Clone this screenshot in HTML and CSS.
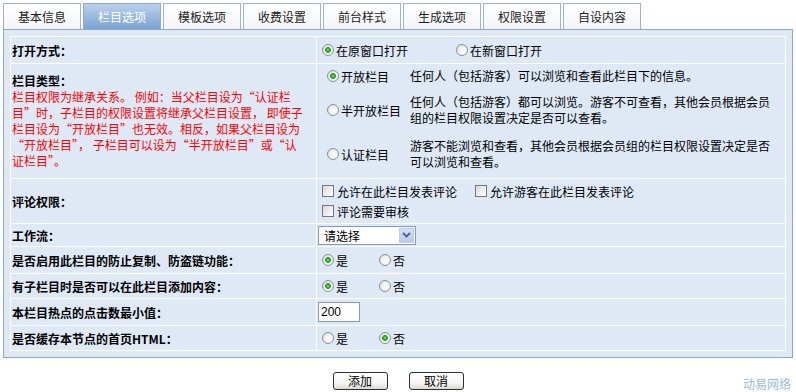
FILE: index.html
```html
<!DOCTYPE html>
<html lang="zh-CN">
<head>
<meta charset="utf-8">
<title>栏目选项</title>
<link rel="stylesheet" href="styles.css">
</head>
<body>
<div class="tabs">
  <div class="tab">基本信息</div>
  <div class="tab active">栏目选项</div>
  <div class="tab">模板选项</div>
  <div class="tab">收费设置</div>
  <div class="tab">前台样式</div>
  <div class="tab">生成选项</div>
  <div class="tab">权限设置</div>
  <div class="tab">自设内容</div>
</div>
<div class="panel">
  <div class="form">
    <div class="lab">打开方式：</div>
    <div class="val opts opts-open">
      <label><input type="radio" name="open" checked>在原窗口打开</label>
      <label><input type="radio" name="open">在新窗口打开</label>
    </div>

    <div class="lab stack">
      <div>栏目类型：</div>
      <div class="note">栏目权限为继承关系。 例如：当父栏目设为“认证栏<br>目”时，子栏目的权限设置将继承父栏目设置， 即使子<br>栏目设为“开放栏目”也无效。相反，如果父栏目设为<br>“开放栏目”， 子栏目可以设为“半开放栏目”或“认<br>证栏目”。</div>
    </div>
    <div class="val top">
      <div class="types">
        <label><input type="radio" name="type" checked>开放栏目</label>
        <div class="desc">任何人（包括游客）可以浏览和查看此栏目下的信息。</div>
        <label><input type="radio" name="type">半开放栏目</label>
        <div class="desc">任何人（包括游客）都可以浏览。游客不可查看，其他会员根据会员<br>组的栏目权限设置决定是否可以查看。</div>
        <label><input type="radio" name="type">认证栏目</label>
        <div class="desc">游客不能浏览和查看，其他会员根据会员组的栏目权限设置决定是否<br>可以浏览和查看。</div>
      </div>
    </div>

    <div class="lab">评论权限：</div>
    <div class="val checks">
      <div class="line">
        <label><input type="checkbox">允许在此栏目发表评论</label>
        <label><input type="checkbox">允许游客在此栏目发表评论</label>
      </div>
      <div class="line">
        <label><input type="checkbox">评论需要审核</label>
      </div>
    </div>

    <div class="lab">工作流：</div>
    <div class="val">
      <div class="select">
        <select><option>请选择</option></select>
        <span class="arrow"><svg width="9" height="6" viewBox="0 0 9 6"><path d="M1 1 L4.5 4.5 L8 1" fill="none" stroke="#4d6185" stroke-width="1.8"/></svg></span>
      </div>
    </div>

    <div class="lab">是否启用此栏目的防止复制、防盗链功能：</div>
    <div class="val opts">
      <label><input type="radio" name="copy" checked>是</label>
      <label><input type="radio" name="copy">否</label>
    </div>

    <div class="lab">有子栏目时是否可以在此栏目添加内容：</div>
    <div class="val opts">
      <label><input type="radio" name="add" checked>是</label>
      <label><input type="radio" name="add">否</label>
    </div>

    <div class="lab">本栏目热点的点击数最小值：</div>
    <div class="val">
      <input class="text" type="text" value="200">
    </div>

    <div class="lab">是否缓存本节点的首页HTML：</div>
    <div class="val opts">
      <label><input type="radio" name="cache">是</label>
      <label><input type="radio" name="cache" checked>否</label>
    </div>
  </div>
</div>
<div class="actions">
  <div class="btns">
    <button class="btn" type="button">添加</button>
    <button class="btn" type="button">取消</button>
  </div>
  <div class="brand">动易网络</div>
</div>
</body>
</html>
```
FILE: styles.css
```css
* { box-sizing: border-box; }

body {
  margin: 0;
  background: #fff;
  color: #000;
  font-family: "Noto Sans CJK SC", "Noto Sans", sans-serif;
  font-size: 12px;
  line-height: 17px;
}

.tabs {
  display: flex;
  gap: 2px;
  padding: 3px 0 0 3px;
}

.tab {
  width: 78px;
  height: 26px;
  border: 1px solid #9db4cb;
  border-bottom: 0;
  background: linear-gradient(#ffffff, #f2f5f9);
  text-align: center;
  line-height: 25px;
  color: #1b1b1b;
}

.tab.active {
  background: linear-gradient(#bad1ed, #7aa2d4);
  border-color: #8eabca;
  color: #fff;
}

.panel {
  margin-left: 3px;
  width: 790px;
  border: 1px solid #8fa7bf;
  background: #dee9f5;
  padding: 6px;
}

.form {
  display: grid;
  grid-template-columns: 305px 1fr;
  grid-template-rows: 26px 114px 44px 22px 26px 24px 26px 24px;
  gap: 1px;
  padding: 1px;
  background: #fff;
}

.lab,
.val {
  background: #dee9f5;
  display: flex;
  align-items: center;
}

.lab {
  padding-left: 1px;
  font-weight: bold;
}

.lab.stack {
  flex-direction: column;
  align-items: flex-start;
  justify-content: center;
  line-height: 16px;
}

.note {
  color: #f00;
  font-weight: normal;
}

.val.top { align-items: flex-start; }

label {
  display: inline-flex;
  align-items: center;
  white-space: nowrap;
}

input[type=radio] {
  appearance: none;
  -webkit-appearance: none;
  width: 12px;
  height: 12px;
  margin: 0 2px 0 5px;
  border: 1px solid #84929f;
  border-radius: 50%;
  background: radial-gradient(circle at 65% 65%, #ffffff 0, #f3f3ef 45%, #d4d4ce 100%);
}

input[type=radio]:checked {
  background:
    radial-gradient(circle at 50% 50%, #9be585 0, #34ac2c 1.6px, #21a121 2.6px, rgba(33,161,33,0) 3.2px),
    radial-gradient(circle at 65% 65%, #ffffff 0, #f3f3ef 45%, #d4d4ce 100%);
}

input[type=checkbox] {
  appearance: none;
  -webkit-appearance: none;
  width: 12px;
  height: 12px;
  margin: 0 3px 0 5px;
  border: 1px solid #6c7885;
  background: linear-gradient(135deg, #d9d9d3, #ffffff);
}

.opts { gap: 26px; }
.opts-open { gap: 43px; }

.types {
  display: grid;
  grid-template-columns: 88px 1fr;
  grid-template-rows: 24px 44px 44px;
  align-items: center;
  padding-left: 5px;
}

.desc { line-height: 16px; }

.checks {
  flex-direction: column;
  align-items: flex-start;
  justify-content: center;
}

.checks .line {
  display: flex;
  gap: 13px;
  height: 20px;
  align-items: center;
}

.select {
  display: flex;
  width: 98px;
  height: 19px;
  margin-left: 1px;
  border: 1px solid #7f9db9;
  background: #fff;
  padding: 1px;
}

.select select {
  appearance: none;
  -webkit-appearance: none;
  flex: 1;
  min-width: 0;
  border: 0;
  padding: 0 0 0 4px;
  background: transparent;
  font: inherit;
  line-height: 15px;
  color: #000;
}

.arrow {
  width: 15px;
  display: flex;
  align-items: center;
  justify-content: center;
  border: 1px solid #bccbec;
  background: linear-gradient(#d3defa, #b8caf0);
}

.text {
  width: 42px;
  height: 20px;
  margin: 0 0 0 1px;
  border: 1px solid #7f9db9;
  padding: 0 2px;
  font-family: "Liberation Sans", Arial, sans-serif;
  font-size: 12px;
  background: #fff;
}

.actions {
  display: grid;
  grid-template-columns: 1fr auto 1fr;
  margin-top: 14px;
}

.btns {
  grid-column: 2;
  display: flex;
  gap: 21px;
}

.btn {
  width: 55px;
  height: 18px;
  padding: 0;
  border: 1px solid #25303c;
  border-radius: 3px;
  background: linear-gradient(#ffffff, #f5f5f1 65%, #dcd8cd);
  font: inherit;
  line-height: 16px;
  color: #000;
}

.brand {
  grid-column: 3;
  justify-self: end;
  margin-top: 4px;
  padding-right: 5px;
  line-height: 16px;
  color: #98bcd6;
}
```
